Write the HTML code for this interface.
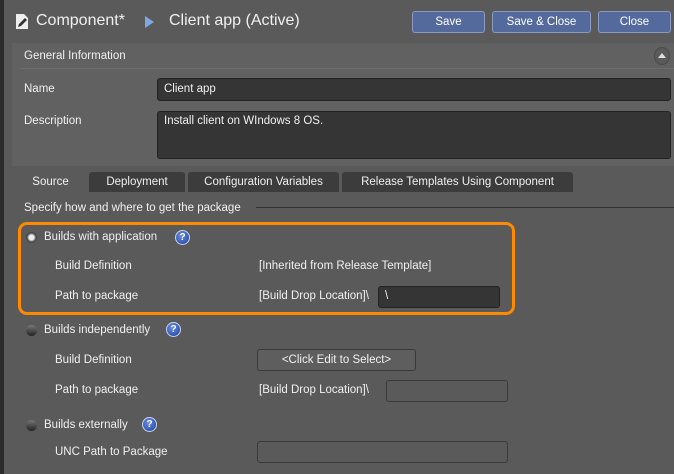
<!DOCTYPE html>
<html><head><meta charset="utf-8"><style>
*{margin:0;padding:0;box-sizing:border-box}
body{width:674px;height:474px;background:#5a5a5a;font-family:"Liberation Sans",sans-serif;font-size:11.5px;color:#f0f0f0;position:relative;overflow:hidden}
.a{position:absolute;white-space:nowrap}
.btn{position:absolute;top:11px;height:22px;background:#546a9c;border:1px solid #8a9ac0;border-radius:3px;text-align:center;line-height:20px;font-size:11.5px;color:#fff}
.in{position:absolute;background:#353535;border:1px solid #222;border-radius:3px}
.tab{position:absolute;top:172px;height:20px;background:#3c3c3c;border-radius:3px 3px 0 0;text-align:center;line-height:20px}
.q{position:absolute;width:15px;height:15px;border-radius:50%;background:radial-gradient(circle at 40% 35%,#6a8ee0,#1d3f9e);border:1px solid #c8d4f0;color:#fff;font-weight:bold;font-size:10px;text-align:center;line-height:13px}
.r{position:absolute;width:11px;height:11px;border-radius:50%;background:linear-gradient(#777,#222)}
</style></head><body>
<div class="a" style="left:0;top:0;width:4px;height:474px;background:#2b2b2b"></div>
<svg class="a" style="left:15px;top:13px" width="14" height="17" viewBox="0 0 14 17"><path d="M1 1h8l4 4v11H1z" fill="#eee"/><path d="M3 14l1-3 6-6 2 2-6 6z" fill="#333"/></svg>
<div class="a" style="left:36px;top:12px;font-size:16px">Component*</div>
<div class="a" style="left:145px;top:16px;width:0;height:0;border-left:9px solid #7fa8e0;border-top:6px solid transparent;border-bottom:6px solid transparent"></div>
<div class="a" style="left:169px;top:12px;font-size:16px">Client app (Active)</div>
<div class="btn" style="left:412px;width:73px">Save</div>
<div class="btn" style="left:492px;width:99px">Save &amp; Close</div>
<div class="btn" style="left:598px;width:73px">Close</div>
<div class="a" style="left:12px;top:43px;width:662px;height:123px;background:#616161"></div>
<div class="a" style="left:20px;top:68px;width:654px;height:1px;background:#6c6c6c"></div>
<div class="a" style="left:24px;top:50px">General Information</div>
<div class="a" style="left:654px;top:47px;width:16px;height:18px;border-radius:50%;border:1px solid #4a4a4a;background:#5a5a5a"></div>
<div class="a" style="left:658px;top:53px;width:0;height:0;border-bottom:5px solid #ddd;border-left:4px solid transparent;border-right:4px solid transparent"></div>
<div class="a" style="left:24px;top:83px">Name</div>
<div class="in" style="left:157px;top:78px;width:514px;height:23px"></div>
<div class="a" style="left:164px;top:83px">Client app</div>
<div class="a" style="left:24px;top:115px">Description</div>
<div class="in" style="left:157px;top:111px;width:514px;height:48px"></div>
<div class="a" style="left:164px;top:115px">Install client on WIndows 8 OS.</div>
<div class="tab" style="left:15px;width:71px;background:#5a5a5a">Source</div>
<div class="tab" style="left:89px;width:96px">Deployment</div>
<div class="tab" style="left:188px;width:151px">Configuration Variables</div>
<div class="tab" style="left:342px;width:231px">Release Templates Using Component</div>
<div class="a" style="left:24px;top:202px">Specify how and where to get the package</div>
<div class="a" style="left:256px;top:207px;width:418px;height:1px;background:#333"></div>
<div class="a" style="left:18px;top:222px;width:497px;height:93px;border:3px solid #ff8a00;border-radius:9px"></div>
<div class="r" style="left:26px;top:232px;background:radial-gradient(#eee 30%,#444 60%)"></div>
<div class="a" style="left:44px;top:231px">Builds with application</div>
<div class="q" style="left:175px;top:230px">?</div>
<div class="a" style="left:55px;top:260px">Build Definition</div>
<div class="a" style="left:259px;top:260px">[Inherited from Release Template]</div>
<div class="a" style="left:55px;top:290px">Path to package</div>
<div class="a" style="left:259px;top:290px">[Build Drop Location]\</div>
<div class="in" style="left:378px;top:286px;width:122px;height:22px"></div>
<div class="a" style="left:385px;top:290px">\</div>
<div class="r" style="left:26px;top:325px"></div>
<div class="a" style="left:44px;top:324px">Builds independently</div>
<div class="q" style="left:166px;top:322px">?</div>
<div class="a" style="left:55px;top:354px">Build Definition</div>
<div class="a" style="left:257px;top:349px;width:159px;height:22px;border:1px solid #3a3a3a;border-radius:3px;background:#5e5e5e;text-align:center;line-height:20px">&lt;Click Edit to Select&gt;</div>
<div class="a" style="left:55px;top:384px">Path to package</div>
<div class="a" style="left:259px;top:384px">[Build Drop Location]\</div>
<div class="a" style="left:386px;top:380px;width:122px;height:22px;border:1px solid #3a3a3a;border-radius:3px"></div>
<div class="r" style="left:26px;top:420px"></div>
<div class="a" style="left:44px;top:419px">Builds externally</div>
<div class="q" style="left:142px;top:417px">?</div>
<div class="a" style="left:55px;top:446px">UNC Path to Package</div>
<div class="a" style="left:257px;top:441px;width:251px;height:22px;border:1px solid #3a3a3a;border-radius:3px"></div>
</body></html>
